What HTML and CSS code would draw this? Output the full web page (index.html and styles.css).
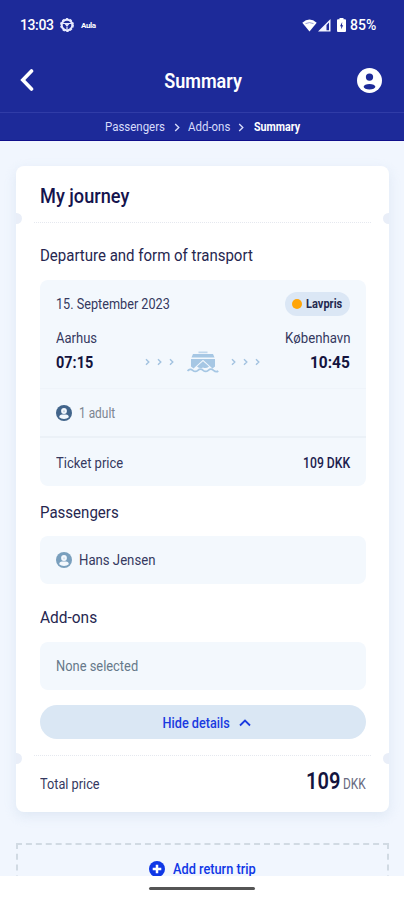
FILE: index.html
```html
<!DOCTYPE html>
<html lang="en">
<head>
<meta charset="utf-8">
<title>Summary</title>
<link rel="stylesheet" href="styles.css">
</head>
<body>
<svg class="defs" width="0" height="0">
  <symbol id="user" viewBox="0 0 24 24"><circle cx="12" cy="12" r="12" fill="currentColor"/><circle cx="12" cy="8.700" r="3.500" fill="#1d2a99"/><ellipse cx="12" cy="18" rx="5.600" ry="2.700" fill="#1d2a99"/></symbol>
  <symbol id="person" viewBox="0 0 16 16"><circle cx="8" cy="8" r="8" fill="currentColor"/><circle cx="8" cy="6" r="2.900" fill="#f3f8fd"/><path d="M3.200 12.300Q3.400 9.600 6 9.600H10Q12.600 9.600 12.800 12.300Q11 14 8 14T3.200 12.300Z" fill="#f3f8fd"/><circle cx="8" cy="6.300" r="1.100" fill="currentColor" opacity=".25"/></symbol>
  <symbol id="chev" viewBox="0 0 6 10"><path d="M1 1l4 4-4 4" fill="none" stroke="currentColor" stroke-width="1.500"/></symbol>
</svg>
<div class="screen">
  <header class="header">
    <div class="status">
      <span class="clock">13:03</span>
      <svg class="wheel" viewBox="0 0 14 14" width="14" height="14"><circle cx="7" cy="7" r="5.300" fill="none" stroke="#e8eaff" stroke-width="2"/><circle cx="7" cy="7" r="6.300" fill="none" stroke="#e8eaff" stroke-width="1.200" stroke-dasharray="2.500 1.460"/><path d="M3 5.500h8M7 6v5M5 5.500l2 2.500 2-2.500" fill="none" stroke="#e8eaff" stroke-width="1.200"/></svg>
      <span class="aula">Aula</span>
      <span class="grow"></span>
      <svg class="wifi" viewBox="0 0 15 13" width="15" height="13"><path d="M0.300 3.800Q7.500-2.600 14.700 3.800L7.500 12.500Z" fill="#fff"/><path d="M3.500 4.600Q7.500 2.600 11.500 4.600" fill="none" stroke="#7d86cb" stroke-width=".8"/></svg>
      <svg class="signal" viewBox="0 0 13 13" width="13" height="13"><path d="M0 12.500L12.500 0V12.500Z" fill="#f2f3ff"/><path d="M8.500 6L11 3.500V11.300H8.500Z" fill="#1e2a9a"/></svg>
      <svg class="battery" viewBox="0 0 9 14" width="9" height="14"><path d="M2.500 0h4v1.300H8Q9 1.300 9 2.300V13Q9 14 8 14H1Q0 14 0 13V2.300Q0 1.300 1 1.300H2.500Z" fill="#fff"/><path d="M5.200 4L3 8.200H4.200V11.300L6.200 7.200H5Z" fill="#1e2a9a"/></svg>
      <span class="percent">85%</span>
    </div>
    <div class="titlebar">
      <svg class="back" viewBox="0 0 14 22" width="14" height="22"><path d="M11.500 2L2.800 11L11.500 20" fill="none" stroke="#fff" stroke-width="3.600" stroke-linecap="round"/></svg>
      <h1 class="title">Summary</h1>
      <svg class="account" width="25" height="25"><use href="#user"/></svg>
    </div>
    <nav class="crumbs">
      <span class="crumb-a">Passengers</span><svg class="sep" width="6" height="9"><use href="#chev"/></svg>
      <span class="crumb-b">Add-ons</span><svg class="sep" width="6" height="9"><use href="#chev"/></svg>
      <span class="crumb-c">Summary</span>
    </nav>
  </header>
  <main class="main">
    <section class="card">
      <div class="card-head"><h2 class="heading">My journey</h2></div>
      <div class="tear"></div>
      <div class="card-body">
        <h3 class="label departure">Departure and form of transport</h3>
        <div class="trip">
          <div class="row date-row"><span class="date">15. September 2023</span><span class="badge"><i class="dot"></i><span class="badge-text">Lavpris</span></span></div>
          <div class="row city-row"><span class="aarhus">Aarhus</span><span class="koben">København</span></div>
          <div class="row time-row">
            <span class="time depart">07:15</span>
            <div class="route">
              <svg class="arrows" width="30" height="8" viewBox="0 0 30 8" fill="none" stroke="#a2c2e0" stroke-width="1.400"><path d="M1 1.200L3.800 4L1 6.800M13 1.200L15.800 4L13 6.800M25 1.200L27.800 4L25 6.800"/></svg>
              <svg class="ferry" width="32" height="22" viewBox="0 0 32 22"><path d="M11.500 .5h9v1.700h-9z" fill="#bfd7ec"/><path d="M6 3h20l1.500 3.500H4.500zM4 8h24v7.500L25.500 17.500L16 8.700L6.500 17.500L4 15.500z" fill="#a6c7e4"/><path d="M16 10.300L22 15.500Q19 18 16 16.500Q13 18 10 15.500z" fill="#a6c7e4"/><path d="M.5 20q2.600-3 5.200-.7t5.200 0t5.200 0t5.200 0t5.200 0t4.800 .7" fill="none" stroke="#a6c7e4" stroke-width="1.700"/></svg>
              <svg class="arrows" width="30" height="8" viewBox="0 0 30 8" fill="none" stroke="#a2c2e0" stroke-width="1.400"><path d="M1 1.200L3.800 4L1 6.800M13 1.200L15.800 4L13 6.800M25 1.200L27.800 4L25 6.800"/></svg>
            </div>
            <span class="time arrive">10:45</span>
          </div>
          <div class="row adult-row"><svg class="ico dark" width="16" height="16"><use href="#person"/></svg><span class="adult">1 adult</span></div>
          <div class="row price-row"><span class="ticket">Ticket price</span><span class="dkk">109 DKK</span></div>
        </div>
        <h3 class="label passengers">Passengers</h3>
        <div class="box"><svg class="ico" width="16" height="16"><use href="#person"/></svg><span class="hans">Hans Jensen</span></div>
        <h3 class="label addons">Add-ons</h3>
        <div class="box"><span class="none">None selected</span></div>
        <button class="hide"><span class="hide-text">Hide details</span><svg width="12" height="8" viewBox="0 0 12 8"><path d="M1 6.500L6 1.500L11 6.500" fill="none" stroke="#1b3be0" stroke-width="1.800"/></svg></button>
      </div>
      <div class="tear lower"></div>
      <div class="total"><span class="total-label">Total price</span><span class="sum"><b class="amount">109</b><span class="currency">DKK</span></span></div>
    </section>
    <div class="return">
      <svg width="16" height="16" viewBox="0 0 16 16"><circle cx="8" cy="8" r="8" fill="#0f37e6"/><path d="M8 3.700V12.300M3.700 8H12.300" stroke="#fff" stroke-width="2.500"/></svg><span class="return-text">Add return trip</span>
    </div>
  </main>
  <footer class="footer"><div class="homebar"></div></footer>
</div>
</body>
</html>
```
FILE: styles.css
```css
*{box-sizing:border-box}
body{margin:0;font-family:Roboto,"Liberation Sans",sans-serif;color:#35395f}
.defs{position:absolute}
h1,h2,h3{margin:0}
svg{display:block;flex:none}
span{white-space:nowrap}
.screen{width:404px;height:900px;display:flex;flex-direction:column;overflow:hidden;background:#fff}
.header{height:141px;background:#1d2a99;border-bottom:1px solid #100f8b;color:#fff;flex:none}
.status{height:50px;display:flex;align-items:center;padding:0 27px 0 20px;font-size:14px;font-weight:500}
.grow{flex:1}
.clock{width:34px;letter-spacing:-.4px}
.wheel{margin-left:6px}
.aula{font-size:8px;font-weight:700;margin-left:7px;letter-spacing:-.4px}
.signal{margin-left:1px}
.battery{margin:0 4px 0 6px}
.percent{width:27px;letter-spacing:.1px}
.titlebar{height:62px;display:flex;align-items:center;justify-content:space-between;padding:0 22px 0 20px}
.back{margin-right:15px;margin-bottom:2px}
.title{font-size:20px;font-weight:600;transform:scaleX(.9)}
.account{margin-bottom:2px}
.crumbs{height:28px;border-top:1px solid #303ca7;display:flex;align-items:center;font-size:12px;color:#d7dcfb;padding:1px 0 0 105px}
.sep{margin:0 8px 0 6px}

/* Condensed text */
.crumbs span,.heading,.label,.date,.aarhus,.depart,.adult,.ticket,.badge-text,.hans,.none,.total-label,.return-text{transform-origin:0 50%}
.koben,.arrive,.dkk,.amount,.currency{transform-origin:100% 50%}
.crumb-a,.crumb-b{transform:scaleX(.955)}
.crumb-c{font-weight:700;color:#fff;transform:scaleX(.89);margin-left:2px}
.main{height:735px;flex:none;overflow:hidden;background:#f1f6fe;padding:25px 15px 0 16px}
.card{height:646px;border-radius:8px;background:#fff;box-shadow:0 4px 12px #c8d6e873;display:flex;flex-direction:column}
.card-head{height:51px;display:flex;align-items:center;padding:9px 24px 0;flex:none}
.heading{font-size:20px;font-weight:500;color:#14134d;transform:scaleX(.908)}
.tear{height:6px;position:relative;flex:none;margin:0 18px;border-bottom:1px dotted #e5e8ef}
.tear::before,.tear::after{content:"";position:absolute;top:-4px;width:6px;height:11px;background:#e9eef8}
.tear::before{left:-18px;border-radius:0 6px 6px 0}
.tear::after{right:-18px;border-radius:6px 0 0 6px}
.lower::before,.lower::after{top:3px}
.card-body{padding:1px 23px 0 24px;height:529px;display:flex;flex-direction:column}
.label{font-size:16px;font-weight:400;color:#26264f;line-height:20px;white-space:nowrap;align-self:flex-start}
.departure{margin:22px 0 14px;transform:scaleX(.938)}
.trip{height:206px;border-radius:8px;background:#f3f8fd;font-size:14px}
.row{display:flex;align-items:center;justify-content:space-between;padding:0 16px}
.date-row{height:48px}
.date{transform:scaleX(.905)}
.badge{height:24px;width:65px;border-radius:12px;background:#dbe7f5;display:flex;align-items:center;padding-left:7px;gap:4px;font-size:12px;font-weight:700;color:#25294f}
.badge-text{transform:scaleX(.92)}
.dot{width:10px;height:10px;border-radius:50%;background:#ffa508}
.city-row{height:22px;padding-bottom:2px}
.aarhus{transform:scaleX(.93)}
.koben{transform:scaleX(.943)}
.time-row{height:38px;padding-bottom:14px}
.time{font-size:17px;font-weight:700;color:#14143e}
.depart{transform:scaleX(.85)}
.arrive{transform:scaleX(.91)}
.route{display:flex;align-items:center;gap:12px}
.adult-row{height:50px;border-top:1px solid #eff4fa;border-bottom:2px solid #ebf1f7;justify-content:flex-start;gap:7px;color:#7c8591}
.adult{transform:scaleX(.85)}
.ico{color:#799fbd}
.ico.dark{color:#42658b}
.price-row{height:48px;padding-top:2px}
.ticket{transform:scaleX(.93)}
.dkk{font-weight:500;color:#20204d;transform:scaleX(.87)}
.passengers{margin:17px 0 13px;transform:scaleX(.94)}
.addons{margin:24px 0 14px;transform:scaleX(.966)}
.box{height:48px;flex:none;background:#f3f8fd;border-radius:8px;display:flex;align-items:center;padding:0 16px;gap:7px;font-size:14px}
.hans{transform:scaleX(.94)}
.none{color:#66798a;transform:scaleX(.92)}
.hide{height:34px;flex:none;margin-top:15px;border:0;border-radius:17px;background:#dae7f4;display:flex;align-items:center;justify-content:center;gap:5px;color:#1b3be0;font:500 14px Roboto,sans-serif;padding:1px 0 0 4px}
.hide-text{transform:scaleX(.905)}
.total{height:56px;display:flex;align-items:center;justify-content:space-between;padding:0 23px 3px 24px;font-size:14px}
.total-label{transform:scaleX(.91);padding-top:3px}
.sum{display:flex;align-items:baseline;padding-bottom:2px}
.amount{font-size:23px;font-weight:600;color:#14143e;transform:scaleX(.87);margin-right:-1px}
.currency{color:#686a80;transform:scaleX(.85)}
.return{height:60px;margin:31px 0 0;border:2px dashed #d1dae3;display:flex;justify-content:center;padding:16px 0 0 8px;gap:8px;font-size:14px;font-weight:500;color:#0f37e6}
.return-text{transform:scaleX(.912)}
.footer{height:24px;display:flex;justify-content:center;padding-top:11px}
.homebar{width:106px;height:3px;background:#555;border-radius:2px}
```
